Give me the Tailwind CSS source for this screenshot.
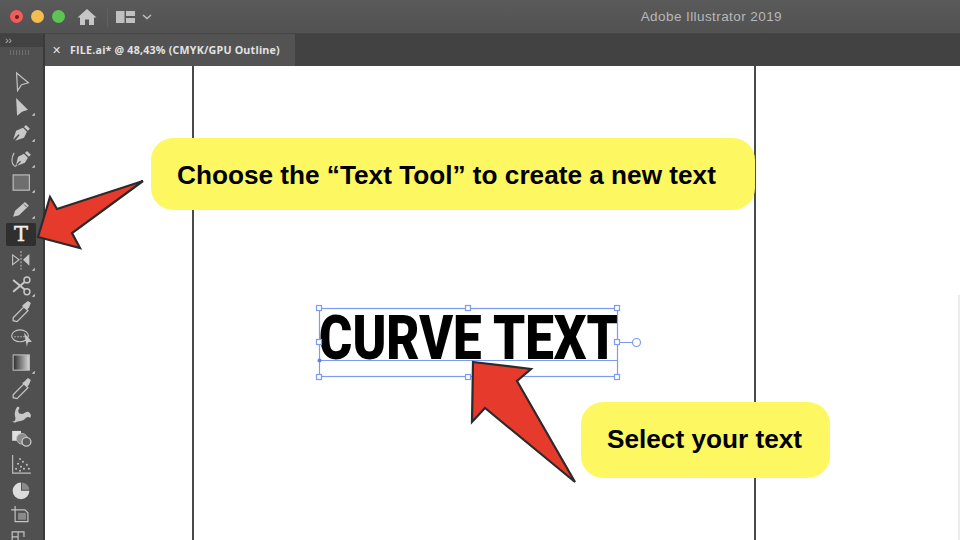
<!DOCTYPE html>
<html>
<head>
<meta charset="utf-8">
<script src="https://cdn.jsdelivr.net/npm/@tailwindcss/browser@4"></script>
</head>
<body class="m-0">
<div class="relative w-[960px] h-[540px] overflow-hidden bg-white font-['Liberation_Sans',sans-serif]">
  <!-- Title bar -->
  <div class="h-[34px] bg-gradient-to-b from-[#5a5a5a] to-[#525252] border-b border-[#454545] flex items-center pl-[10px]">
    <div class="w-[13px] h-[13px] rounded-full bg-[#ee5f5b] flex items-center justify-center"><div class="w-1 h-1 rounded-full bg-[#7a1a18]"></div></div>
    <div class="w-[13px] h-[13px] rounded-full bg-[#f5bd4f] ml-2"></div>
    <div class="w-[13px] h-[13px] rounded-full bg-[#5ec454] ml-2"></div>
    <svg class="ml-[12px]" width="20" height="18" viewBox="0 0 20 18"><path d="M10 1 L0.5 9.5 L3 9.5 L3 17 L8 17 L8 11.5 L12 11.5 L12 17 L17 17 L17 9.5 L19.5 9.5 Z" fill="#c6c6c6"/></svg>
    <div class="w-px h-5 bg-[#606060] ml-[10px]"></div>
    <svg class="ml-[8px]" width="20" height="14" viewBox="0 0 20 14"><path d="M0 1h8.5v12H0zM10 1h9v5H10zM10 8h9v5H10z" fill="#c0c0c0"/></svg>
    <svg class="ml-[6px]" width="10" height="6" viewBox="0 0 10 6"><path d="M1 1l4 3.5L9 1" fill="none" stroke="#c0c0c0" stroke-width="1.4"/></svg>
    <div class="ml-auto mr-[178px] pt-[1px] text-[13.5px] tracking-[0.42px] text-[#b8b8b8]">Adobe Illustrator 2019</div>
  </div>
  <div class="flex h-[506px]">
    <!-- Toolbar -->
    <div class="w-[45px] shrink-0 bg-[#505050] border-r-2 border-[#3a3a3a] flex flex-col overflow-hidden">
      <div class="h-[13px] shrink-0 bg-[#424242] text-[#b8b8b8] text-[11px] leading-[13px] pl-[5px] tracking-[-0.5px]">››</div>
      <div class="h-[21px] shrink-0 pt-[3px] pl-[10px]"><div class="w-[21px] h-[5px] bg-[repeating-linear-gradient(90deg,#707070_0,#707070_1px,transparent_1px,transparent_3px)]"></div></div>
      <!-- selection -->
      <svg class="shrink-0 h-[25.6px]" width="44" viewBox="0 0 44 26"><path d="M16.500 5L28.500 15L21.500 17L17.500 23Z" fill="none" stroke="#c4c4c4" stroke-width="1.2"/></svg>
      <!-- direct selection -->
      <svg class="shrink-0 h-[25.6px]" width="44" viewBox="0 0 44 26"><path d="M16 4L28 16L22 18L17 22Z" fill="#c8c8c8"/><path d="M32 22L35 19V22Z" fill="#d0d0d0"/></svg>
      <!-- pen -->
      <svg class="shrink-0 h-[25.6px]" width="44" viewBox="0 0 44 26"><path d="M13 21L16 12L23 9L27 13L24 19L15 22L19.500 16.500L18.500 15.500Z" fill="#c8c8c8"/><path d="M24 8L26 6L30 10L28 12Z" fill="#c8c8c8"/><path d="M32 23L35 20V23Z" fill="#d0d0d0"/></svg>
      <!-- curvature -->
      <svg class="shrink-0 h-[25.6px]" width="44" viewBox="0 0 44 26"><path d="M16 20L18 12L24 9L28 13L25 18L17 21L21 17L20 16Z" fill="#c8c8c8"/><path d="M25 8L27 6L31 10L29 12Z" fill="#c8c8c8"/><path d="M14 8C11 13 11 19 14 21C15 22 17 21 16 20" fill="none" stroke="#c4c4c4" stroke-width="1.1"/><path d="M32 23L35 20V23Z" fill="#d0d0d0"/></svg>
      <!-- rectangle -->
      <svg class="shrink-0 h-[25.6px]" width="44" viewBox="0 0 44 26"><rect x="13" y="5" width="16.500" height="15.500" fill="#6e6e6e" stroke="#bdbdbd" stroke-width="1.2"/><path d="M32 23L35 20V23Z" fill="#d0d0d0"/></svg>
      <!-- pencil -->
      <svg class="shrink-0 h-[25.6px]" width="44" viewBox="0 0 44 26"><path d="M13 21L15 15L25 6L29 10L19 19.500Z" fill="#c8c8c8"/><path d="M24 8.500L27 11.500" stroke="#505050" stroke-width="1"/><path d="M32 23L35 20V23Z" fill="#d0d0d0"/></svg>
      <!-- type (selected) -->
      <div class="shrink-0 h-[25.6px] flex items-center relative">
        <div class="ml-[6px] w-[30px] h-[23px] rounded-[2px] bg-[#2f2f2f] flex items-center justify-center text-[#f0f0f0] text-[21px] leading-none font-['DejaVu_Serif',serif] [-webkit-text-stroke:0.4px_#f0f0f0]">T</div>
      </div>
      <!-- reflect -->
      <svg class="shrink-0 h-[25.6px]" width="44" viewBox="0 0 44 26"><path d="M12.500 8L19 13L12.500 18Z" fill="none" stroke="#c4c4c4" stroke-width="1.1"/><path d="M29.500 7L23 13L29.500 19Z" fill="#c8c8c8"/><path d="M21 4V23" stroke="#c4c4c4" stroke-dasharray="2 1.5"/><path d="M32 24L35 21V24Z" fill="#d0d0d0"/></svg>
      <!-- scissors -->
      <svg class="shrink-0 h-[25.6px]" width="44" viewBox="0 0 44 26"><circle cx="27" cy="7" r="3" fill="none" stroke="#c8c8c8" stroke-width="1.5"/><circle cx="27" cy="19" r="3" fill="none" stroke="#c8c8c8" stroke-width="1.5"/><path d="M13 7L25 17M13 19L25 9" stroke="#c8c8c8" stroke-width="2"/><path d="M32 24L35 21V24Z" fill="#d0d0d0"/></svg>
      <!-- eyedropper-like width -->
      <svg class="shrink-0 h-[25.6px]" width="44" viewBox="0 0 44 26"><path d="M13 23L13 20L24 9L28 13L17 24Z" fill="none" stroke="#c4c4c4" stroke-width="1.3"/><path d="M24 6L28 3L31 5L29 10L27 12L22 8Z" fill="#c8c8c8"/></svg>
      <!-- shape builder -->
      <svg class="shrink-0 h-[25.6px]" width="44" viewBox="0 0 44 26"><ellipse cx="20" cy="12" rx="8.500" ry="6" fill="none" stroke="#c4c4c4" stroke-width="1.2"/><path d="M14 13H26" stroke="#c4c4c4" stroke-width=".8" stroke-dasharray="2 1"/><path d="M24 9L32 18L28 18.500L27 23Z" fill="#c8c8c8"/></svg>
      <!-- gradient -->
      <svg class="shrink-0 h-[25.6px]" width="44" viewBox="0 0 44 26">
        <defs><linearGradient id="grd" x1="0" x2="1"><stop offset="0" stop-color="#2c2c2c"/><stop offset="1" stop-color="#d8d8d8"/></linearGradient></defs>
        <rect x="13" y="5" width="16.500" height="15.500" fill="url(#grd)" stroke="#bdbdbd" stroke-width="1.1"/><path d="M32 24L35 21V24Z" fill="#d0d0d0"/></svg>
      <!-- eyedropper -->
      <svg class="shrink-0 h-[25.6px]" width="44" viewBox="0 0 44 26"><path d="M13 23L13 20L24 9L28 13L17 24Z" fill="none" stroke="#c4c4c4" stroke-width="1.3"/><path d="M24 7L28 3L31 5L29 10L27 12L22 8Z" fill="#c8c8c8"/></svg>
      <!-- blend/symbol -->
      <svg class="shrink-0 h-[25.6px]" width="44" viewBox="0 0 44 26"><path d="M12 21C15 21 16 19 15 16C14 13 15 9 17 6C19 5 20 7 19 8C17 10 19 13 21 13C24 14 25 11 28 11C31 12 32 16 30 17C28 15 26 17 24 19C21 21 17 20 15 22Z" fill="#c8c8c8"/></svg>
      <!-- live paint / shapes -->
      <svg class="shrink-0 h-[25.6px]" width="44" viewBox="0 0 44 26"><rect x="12" y="5" width="9" height="10" fill="#e0e0e0"/><circle cx="22" cy="13" r="5.500" fill="#8c8c8c" stroke="#bdbdbd" stroke-width=".8"/><circle cx="26.500" cy="16" r="4.500" fill="#5a5a5a" stroke="#c8c8c8" stroke-width="1.4"/></svg>
      <!-- graph -->
      <svg class="shrink-0 h-[25.6px]" width="44" viewBox="0 0 44 26"><path d="M12.500 3V21.500H31" fill="none" stroke="#bdbdbd" stroke-width="1.2"/><g fill="#c4c4c4"><circle cx="20" cy="7" r="1"/><circle cx="23" cy="10" r="1"/><circle cx="18" cy="12" r="1"/><circle cx="27" cy="13" r="1"/><circle cx="21" cy="15" r="1"/><circle cx="16" cy="17" r="1"/><circle cx="24" cy="17" r="1"/><circle cx="29" cy="17" r="1"/><circle cx="20" cy="19" r="1"/></g></svg>
      <!-- pie -->
      <svg class="shrink-0 h-[25.6px]" width="44" viewBox="0 0 44 26"><path d="M21 13V4.500A8.500 8.500 0 1 0 29.500 13Z" fill="#dcdcdc"/><path d="M22 12V4.500A8 8 0 0 1 29.500 12Z" fill="#8a8a8a"/></svg>
      <!-- artboard -->
      <svg class="shrink-0 h-[25.6px]" width="44" viewBox="0 0 44 26"><path d="M11 7H15V3M15 7V19H28V10L25 7H15" fill="none" stroke="#c4c4c4" stroke-width="1.2"/><rect x="18" y="10" width="8" height="7" fill="#8a8a8a"/></svg>
      <!-- slice partial -->
      <svg class="shrink-0 h-[25.6px]" width="44" viewBox="0 0 44 26"><path d="M12 20V3H24V8M18 3V20M12 8H18" fill="none" stroke="#c4c4c4" stroke-width="1.2"/></svg>
    </div>
    <!-- Right column -->
    <div class="flex-1 flex flex-col">
      <div class="h-[32px] shrink-0 bg-[#424242] flex">
        <div class="w-[250px] h-full bg-[#535353] flex items-center pl-[7px] text-[#e2e2e2]">
          <span class="text-[11px] leading-none w-[18px]">✕</span>
          <span class="text-[10.7px] font-bold tracking-[0.2px] font-['Open_Sans',sans-serif]">FILE.ai* @ 48,43% (CMYK/GPU Outline)</span>
        </div>
      </div>
      <div class="flex-1 bg-white"></div>
    </div>
  </div>

  <!-- Canvas objects -->
  <div class="absolute left-[192px] top-[66px] w-[2px] h-[474px] bg-[#4a4a4a]"></div>
  <div class="absolute left-[754px] top-[66px] w-[2px] h-[474px] bg-[#4a4a4a]"></div>
  <div class="absolute left-[958px] top-[295px] w-[2px] h-[245px] bg-[#ececec]"></div>

  <!-- Curve text -->
  <div class="absolute left-[320px] top-[303px] w-[297px] h-[70px] flex items-center justify-center whitespace-nowrap">
    <span class="inline-block scale-x-[0.825] text-black text-[62px] leading-[70px] font-black font-['Roboto',sans-serif]">CURVE TEXT</span>
  </div>

  <!-- Selection box -->
  <svg class="absolute left-0 top-0" width="960" height="540" viewBox="0 0 960 540" fill="none">
    <g stroke="#7c9bf5" stroke-width="1.2">
      <rect x="319.500" y="308.500" width="298" height="68"/>
      <path d="M319.500 360.500H617.500M617.500 342.500H632"/>
      <circle cx="636.500" cy="342.500" r="4" fill="#fff"/>
      <g fill="#fff">
        <rect x="316.500" y="305.500" width="5" height="5"/>
        <rect x="465.500" y="305.500" width="5" height="5"/>
        <rect x="614.500" y="305.500" width="5" height="5"/>
        <rect x="316.500" y="339.500" width="5" height="5"/>
        <rect x="614.500" y="339.500" width="5" height="5"/>
        <rect x="316.500" y="374.500" width="5" height="5"/>
        <rect x="465.500" y="374.500" width="5" height="5"/>
        <rect x="614.500" y="374.500" width="5" height="5"/>
      </g>
    </g>
    <circle cx="319.500" cy="360.500" r="2" fill="#5c80f0"/>
    <!-- arrows -->
    <g fill="#e53a2c" stroke="#2b2b2b" stroke-width="2.200" stroke-linejoin="miter">
      <path d="M38 237L50 197L57 209L143 181L72 233L80 248Z"/>
      <path d="M473 362L531 369L517 381L575 482L485 408L472 422Z"/>
    </g>
  </svg>

  <!-- Callouts -->
  <div class="absolute left-[151px] top-[138px] w-[604px] h-[72px] rounded-[22px] bg-[#fdf862] flex items-center pl-[26px] pt-[4px] text-[26.200px] font-bold text-black whitespace-nowrap">Choose the “Text Tool” to create a new text</div>
  <div class="absolute left-[581px] top-[402px] w-[249px] h-[76px] rounded-[22px] bg-[#fdf862] flex items-center pl-[26px] pb-[1px] text-[26.200px] font-bold text-black whitespace-nowrap">Select your text</div>
</div>
</body>
</html>
